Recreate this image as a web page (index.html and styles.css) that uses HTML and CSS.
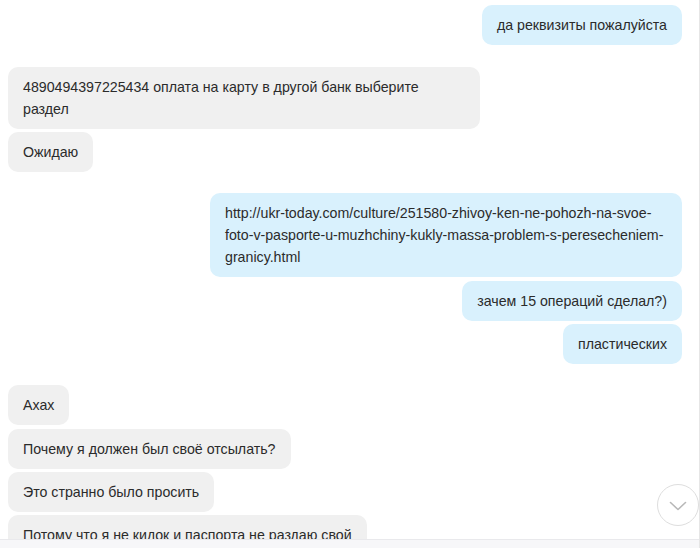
FILE: index.html
```html
<!DOCTYPE html>
<html lang="ru">
<head>
<meta charset="utf-8">
<link rel="stylesheet" href="styles.css">
</head>
<body>
<div class="app">
  <div class="chat">
    <div class="group out">
      <div class="msg">да реквизиты пожалуйста</div>
    </div>
    <div class="group in">
      <div class="msg wide">4890494397225434 оплата на карту в другой банк выберите раздел</div>
      <div class="msg">Ожидаю</div>
    </div>
    <div class="group out">
      <div class="msg wide">http://ukr-today.com/culture/251580-zhivoy-ken-ne-pohozh-na-svoe-foto-v-pasporte-u-muzhchiny-kukly-massa-problem-s-peresecheniem-granicy.html</div>
      <div class="msg">зачем 15 операций сделал?)</div>
      <div class="msg">пластических</div>
    </div>
    <div class="group in">
      <div class="msg">Ахах</div>
      <div class="msg">Почему я должен был своё отсылать?</div>
      <div class="msg">Это странно было просить</div>
      <div class="msg">Потому что я не кидок и паспорта не раздаю свой</div>
    </div>
    <button class="scroll-down" aria-label="Вниз">
      <svg width="18" height="10" viewBox="0 0 18 10"><path d="M1.5 1.5 L9 8.5 L16.5 1.5" fill="none" stroke="#b8b8b8" stroke-width="1.6" stroke-linecap="round" stroke-linejoin="round"/></svg>
    </button>
  </div>
  <div class="composer"></div>
</div>
</body>
</html>
```
FILE: styles.css
```css
html, body {
  margin: 0;
  padding: 0;
  background: #fff;
}
body {
  font-family: "Liberation Sans", Arial, sans-serif;
  font-size: 14.2px;
  color: #2b2b2b;
}
.app {
  width: 699px;
  height: 548px;
  border-right: 1px solid #e6e6e6;
  display: flex;
  flex-direction: column;
  overflow: hidden;
}
.chat {
  position: relative;
  height: 540px;
  overflow: hidden;
  padding: 5px 17px 0 8px;
  box-sizing: border-box;
  display: flex;
  flex-direction: column;
  gap: 21.5px;
  border-bottom: 1px solid #e9e9ec;
}
.group {
  display: flex;
  flex-direction: column;
  gap: 3.3px;
}
.group.out { align-items: flex-end; }
.group.in { align-items: flex-start; }
.msg {
  max-width: 472px;
  box-sizing: border-box;
  padding: 9px 15px;
  line-height: 22px;
  border-radius: 10px;
  flex-shrink: 0;
}
.msg.wide { width: 472px; }
.out .msg { background: #d9f1fd; }
.in .msg { background: #f0f0f0; }
.composer {
  flex: 1;
  background: #f7f7f9;
}
.scroll-down {
  position: absolute;
  left: 657px;
  top: 484px;
  width: 42px;
  height: 42px;
  border-radius: 50%;
  border: 1px solid #dedede;
  background: #fff;
  padding: 0;
  display: flex;
  align-items: center;
  justify-content: center;
}
.scroll-down svg { display: block; margin-top: 1px; }
```
